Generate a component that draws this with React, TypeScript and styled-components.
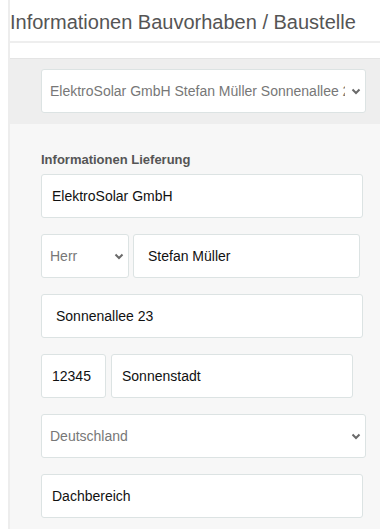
import styled, {createGlobalStyle} from 'styled-components'

const GlobalStyle = createGlobalStyle`
  html, body {
    margin: 0;
    padding: 0;
    background: #fff;
    overflow: hidden;
  }
  body {
    font-family: "Liberation Sans", Arial, sans-serif;
  }
`

const Page = styled.div`
  margin-left: 8px;
  min-height: 529px;
  border-left: 2px solid #ededed;
`

const Title = styled.h3`
  margin: 0 0 15px;
  padding: 11px 0 7px 0;
  border-bottom: 2px solid #eeeeee;
  color: #555;
  font-size: 20px;
  font-weight: 400;
  line-height: 23px;
`

const Panel = styled.section`
  background: #f7f7f7;
  border-top: 1px solid #e4e4e4;
  min-height: 470px;
`

const PanelHeader = styled.div`
  padding: 10px 0 11px 31px;
  background: #eeeeee;
`

const PanelBody = styled.div`
  display: flex;
  flex-direction: column;
  gap: 16px;
  padding: 28px 0 12px 31px;
`

const Group = styled.div`
  display: flex;
  flex-direction: column;
  gap: 6px;
`

const Label = styled.label`
  color: #555;
  font-size: 13px;
  font-weight: 700;
  line-height: 16px;
`

const Row = styled.div<{$gap: number}>`
  display: flex;
  gap: ${(p) => p.$gap}px;
`

const Input = styled.input<{$width: number; $indent?: number}>`
  box-sizing: border-box;
  width: ${(p) => p.$width}px;
  height: 44px;
  padding: 0 8px 0 ${(p) => p.$indent ?? 10}px;
  border: 1px solid #dce3e3;
  border-radius: 3px;
  background: #fff;
  color: #111;
  font-family: inherit;
  font-size: 14px;
  outline: none;
`

const SelectWrap = styled.div<{$width: number}>`
  position: relative;
  width: ${(p) => p.$width}px;
  height: 44px;

  svg {
    position: absolute;
    right: 5px;
    top: 19px;
    pointer-events: none;
  }
`

const Select = styled.select`
  box-sizing: border-box;
  width: 100%;
  height: 44px;
  padding: 0 20px 0 8px;
  border: 1px solid #dce3e3;
  border-radius: 3px;
  background: #fff;
  color: #777;
  font-family: inherit;
  font-size: 14px;
  appearance: none;
  outline: none;
`

function Chevron() {
  return (
    <svg width="10" height="7" viewBox="0 0 10 7">
      <polyline points="1.5,1.5 5,5 8.5,1.5" fill="none" stroke="#6a6a6a" strokeWidth="2" />
    </svg>
  )
}

function Dropdown({width, value}: {width: number; value: string}) {
  return (
    <SelectWrap $width={width}>
      <Select defaultValue={value}>
        <option>{value}</option>
      </Select>
      <Chevron />
    </SelectWrap>
  )
}

export default function App() {
  return (
    <>
      <GlobalStyle />
      <Page>
        <Title>Informationen Bauvorhaben / Baustelle</Title>
        <Panel>
          <PanelHeader>
            <Dropdown width={325} value="ElektroSolar GmbH Stefan Müller Sonnenallee 23" />
          </PanelHeader>
          <PanelBody>
            <Group>
              <Label>Informationen Lieferung</Label>
              <Input $width={322} defaultValue="ElektroSolar GmbH" />
            </Group>
            <Row $gap={4}>
              <Dropdown width={88} value="Herr" />
              <Input $width={227} $indent={14} defaultValue="Stefan Müller" />
            </Row>
            <Input $width={322} $indent={14} defaultValue="Sonnenallee 23" />
            <Row $gap={5}>
              <Input $width={65} defaultValue="12345" />
              <Input $width={242} defaultValue="Sonnenstadt" />
            </Row>
            <Dropdown width={325} value="Deutschland" />
            <Input $width={322} defaultValue="Dachbereich" />
          </PanelBody>
        </Panel>
      </Page>
    </>
  )
}
